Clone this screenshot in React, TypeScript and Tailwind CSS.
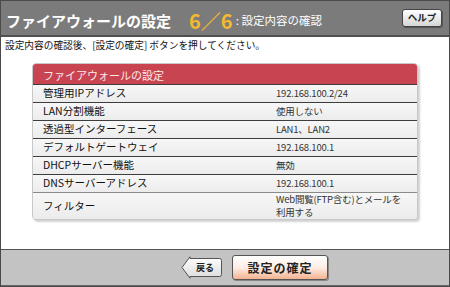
import React from 'react';

const rows: { label: string; value: string }[] = [
  { label: '管理用IPアドレス', value: '192.168.100.2/24' },
  { label: 'LAN分割機能', value: '使用しない' },
  { label: '透過型インターフェース', value: 'LAN1、LAN2' },
  { label: 'デフォルトゲートウェイ', value: '192.168.100.1' },
  { label: 'DHCPサーバー機能', value: '無効' },
  { label: 'DNSサーバーアドレス', value: '192.168.100.1' },
];

const BackButton: React.FC = () => (
  <button className="relative w-[42px] h-[23px] flex items-center justify-center">
    <svg className="absolute inset-0" width="42" height="23" viewBox="0 0 42 23" aria-hidden="true">
      <defs>
        <linearGradient id="backg" x1="0" y1="0" x2="0" y2="1">
          <stop offset="0" stopColor="#ffffff" />
          <stop offset="1" stopColor="#dcdcdc" />
        </linearGradient>
      </defs>
      <path
        d="M1 11.5 L9 0.8 L9 2.5 H38.5 Q40.5 2.5 40.5 4.5 V18.5 Q40.5 20.5 38.5 20.5 H9 V22.2 Z"
        fill="url(#backg)"
        stroke="#555"
        strokeWidth="1"
      />
    </svg>
    <span className="relative pl-[6px] text-[9px] font-bold text-[#222] leading-none">戻る</span>
  </button>
);

export default function App() {
  return (
    <div
      className="w-[450px] h-[287px] flex flex-col border border-[#4a4a4a] bg-white overflow-hidden"
      style={{ fontFamily: '"Noto Sans CJK JP", "Noto Sans", sans-serif' }}
    >
      {/* Header */}
      <div className="h-[36px] shrink-0 bg-[#7b7b7b] border-b-2 border-[#4f4f4f] flex items-center pt-[5px] pl-[5px] pr-[7px]">
        <span className="text-[15px] font-bold text-white leading-none">ファイアウォールの設定</span>
        <span className="ml-[18px] text-[20px] font-bold text-[#f4b930] leading-none">6／6</span>
        <span className="ml-[3px] text-[11.5px] text-white leading-none">: 設定内容の確認</span>
        <button className="ml-auto mb-[5px] w-[40px] h-[18px] rounded-[3px] border border-[#444] bg-gradient-to-b from-white to-[#d6d6d6] text-[9.5px] font-bold text-[#222] leading-none shadow-[1px_1px_0_#555]">
          ヘルプ
        </button>
      </div>

      {/* Content */}
      <div className="flex-1 px-[4px] pt-[2px]">
        <p className="text-[9.7px] leading-[12px] text-[#111]">設定内容の確認後、[設定の確定] ボタンを押してください。</p>

        <div className="mt-[12px] ml-[27px] w-[386px] rounded-[4px] border border-[#c8c8c8] overflow-hidden shadow-[2px_2px_2px_rgba(0,0,0,0.18)] bg-[#f0f0f0]">
          <div className="h-[20px] bg-[#c94451] flex items-center pl-[10px] pt-[2px] text-[11px] text-[#fde8ea] leading-none">
            ファイアウォールの設定
          </div>
          {rows.map((row) => (
            <div key={row.label} className="h-[18px] flex items-center border-t border-[#3d3d3d] bg-gradient-to-b from-[#f7f7f7] to-[#ececec]">
              <span className="w-[243px] pl-[10px] text-[10.5px] text-[#111] leading-none">{row.label}</span>
              <span className="text-[9.5px] text-[#333] leading-none tracking-[-0.2px]">{row.value}</span>
            </div>
          ))}
          <div className="h-[27px] flex items-center border-t border-[#8a8a8a] bg-gradient-to-b from-[#f7f7f7] to-[#ececec]">
            <span className="w-[243px] pl-[10px] text-[10.5px] text-[#111] leading-none">フィルター</span>
            <span className="flex flex-col text-[9.5px] text-[#333] leading-[13px] tracking-[-0.2px]">
              <span>Web閲覧(FTP含む)とメールを</span>
              <span>利用する</span>
            </span>
          </div>
        </div>
      </div>

      {/* Footer */}
      <div className="h-[37px] shrink-0 bg-[#c3c3c3] border-t border-[#555] border-b border-b-[#666] flex items-center pl-[180px] gap-[9px]">
        <BackButton />
        <button className="w-[96px] h-[25px] rounded-[3px] border border-[#555] bg-gradient-to-b from-white via-[#fdeee6] to-[#f2b290] text-[12px] font-bold text-[#222] leading-none tracking-[1px] shadow-[1px_1px_0_#888]">
          設定の確定
        </button>
      </div>
    </div>
  );
}
